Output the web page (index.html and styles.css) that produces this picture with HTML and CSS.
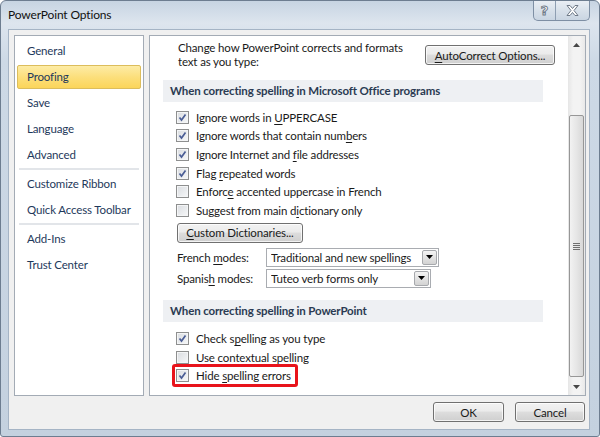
FILE: index.html
```html
<!DOCTYPE html>
<html lang="en">
  <head>
    <meta charset="UTF-8">
    <meta name="viewport" content="width=device-width, initial-scale=1.0">
    <title>PowerPoint Options</title>
    <link rel="stylesheet" href="styles.css">
  </head>
  <body>
    <div class="window">
      <div class="titlebar">
        <span class="title">PowerPoint Options</span>
        <div class="caption">
          <span class="cap-btn help">?</span>
          <span class="cap-btn close">
            <svg width="13" height="11" viewBox="0 0 13 11"><path d="M1 .5h3l2.5 3 2.5-3h3l-4 5 4 5h-3l-2.5-3-2.5 3h-3l4-5z" fill="#fff" stroke="#6f7a88" stroke-linejoin="round"/></svg>
          </span>
        </div>
      </div>

      <div class="client">
        <div class="panes">
          <ul class="nav">
            <li>General</li>
            <li class="selected">Proofing</li>
            <li>Save</li>
            <li>Language</li>
            <li>Advanced</li>
            <li class="sep"></li>
            <li>Customize Ribbon</li>
            <li>Quick Access Toolbar</li>
            <li class="sep"></li>
            <li>Add-Ins</li>
            <li>Trust Center</li>
          </ul>

          <div class="content">
            <div class="scroll-area">
              <div class="intro">
                <p>Change how PowerPoint corrects and formats text as you type:</p>
                <button class="btn autocorrect"><u>A</u>utoCorrect Options...</button>
              </div>

              <h3 class="section">When correcting spelling in Microsoft Office programs</h3>
              <div class="options">
                <div class="option"><span class="cb"><svg viewBox="0 0 11 11"><path d="M2.5 5.5 4.5 8 8.5 2.5"/></svg></span><span>Ignore words in <u>U</u>PPERCASE</span></div>
                <div class="option"><span class="cb"><svg viewBox="0 0 11 11"><path d="M2.5 5.5 4.5 8 8.5 2.5"/></svg></span><span>Ignore words that contain num<u>b</u>ers</span></div>
                <div class="option"><span class="cb"><svg viewBox="0 0 11 11"><path d="M2.5 5.5 4.5 8 8.5 2.5"/></svg></span><span>Ignore Internet and <u>f</u>ile addresses</span></div>
                <div class="option"><span class="cb"><svg viewBox="0 0 11 11"><path d="M2.5 5.5 4.5 8 8.5 2.5"/></svg></span><span>Flag <u>r</u>epeated words</span></div>
                <div class="option"><span class="cb"></span><span>Enforc<u>e</u> accented uppercase in French</span></div>
                <div class="option"><span class="cb"></span><span>Suggest from main d<u>i</u>ctionary only</span></div>
              </div>

              <button class="btn dict"><u>C</u>ustom Dictionaries...</button>

              <div class="mode-row french">
                <span class="mode-label">French <u>m</u>odes:</span>
                <div class="select">
                  <span class="value">Traditional and new spellings</span>
                  <span class="arrow"><svg width="7" height="4" viewBox="0 0 7 4"><path d="M0 0h7L3.5 4z"/></svg></span>
                </div>
              </div>
              <div class="mode-row spanish">
                <span class="mode-label">Spanis<u>h</u> modes:</span>
                <div class="select">
                  <span class="value">Tuteo verb forms only</span>
                  <span class="arrow"><svg width="7" height="4" viewBox="0 0 7 4"><path d="M0 0h7L3.5 4z"/></svg></span>
                </div>
              </div>

              <h3 class="section second">When correcting spelling in PowerPoint</h3>
              <div class="options second">
                <div class="option"><span class="cb"><svg viewBox="0 0 11 11"><path d="M2.5 5.5 4.5 8 8.5 2.5"/></svg></span><span>Check s<u>p</u>elling as you type</span></div>
                <div class="option"><span class="cb"></span><span>Use co<u>n</u>textual spelling</span></div>
                <div class="highlight">
                  <div class="option"><span class="cb"><svg viewBox="0 0 11 11"><path d="M2.5 5.5 4.5 8 8.5 2.5"/></svg></span><span>Hide <u>s</u>pelling errors</span></div>
                </div>
              </div>
            </div>

            <div class="scrollbar">
              <div class="sb-arrow"><svg width="7" height="4" viewBox="0 0 7 4"><path d="M0 4 3.5 0 7 4z"/></svg></div>
              <div class="sb-gap"></div>
              <div class="sb-thumb">
                <svg width="7" height="7" viewBox="0 0 7 7"><path d="M0 .5h7M0 2.5h7M0 4.5h7M0 6.5h7"/></svg>
              </div>
              <div class="sb-rest"></div>
              <div class="sb-arrow"><svg width="7" height="4" viewBox="0 0 7 4"><path d="M0 0h7L3.5 4z"/></svg></div>
            </div>
          </div>
        </div>

        <div class="footer">
          <button class="btn ok">OK</button>
          <button class="btn cancel">Cancel</button>
        </div>
      </div>
    </div>
  </body>
</html>
```

FILE: styles.css
```css
* {
  box-sizing: border-box;
  margin: 0;
  padding: 0;
}

html, body {
  height: 100%;
  overflow: hidden;
}

body {
  background: #fff;
  color: #1a1a1a;
  font-family: Lato, "Liberation Sans", sans-serif;
  font-size: 11.5px;
  letter-spacing: -0.15px;
}

u {
  text-decoration-thickness: 1px;
  text-underline-offset: 2px;
}

/* window frame */

.window {
  width: 600px;
  height: 437px;
  border: 1px solid #6d7d90;
  border-radius: 6px 6px 3px 3px;
  background: linear-gradient(180deg, #c7d4e2 0, #dde5ee 22px, #cdd9e6 60px, #c4d1df 100%);
  padding: 0 9px 6px 7px;
  display: flex;
  flex-direction: column;
}

.titlebar {
  height: 28px;
  display: flex;
  align-items: flex-start;
}

.title {
  padding-top: 6px;
  line-height: 15px;
  font-size: 12px;
  color: #111;
}

.caption {
  margin-left: auto;
  display: flex;
  height: 20px;
  border: 1px solid #7e8fa4;
  border-top: none;
  border-radius: 0 0 5px 5px;
  overflow: hidden;
  background: linear-gradient(180deg, #e9eef4, #d6dfe9 55%, #c9d5e2);
}

.cap-btn {
  display: flex;
  align-items: center;
  justify-content: center;
  height: 100%;
}

.cap-btn.help {
  width: 22px;
  border-right: 1px solid #8e9eb2;
  font-family: "DejaVu Sans", sans-serif;
  font-size: 13px;
  font-weight: bold;
  color: #fff;
  -webkit-text-stroke: 1px #6f7a88;
}

.cap-btn.close {
  width: 33px;
}

/* client area */

.client {
  flex: 1;
  display: flex;
  flex-direction: column;
  background: #f0f0f0;
  border: 1px solid #a5b4c5;
}

.panes {
  height: 366px;
  display: flex;
  gap: 5px;
  padding: 5px 3px 0 5px;
}

.nav {
  width: 130px;
  background: #fff;
  border: 1px solid #a3abb5;
  list-style: none;
  padding: 1px 0 0;
}

.nav li {
  height: 24px;
  line-height: 22px;
  margin: 2px 2px 0;
  padding-left: 9px;
  color: #1e395b;
  border: 1px solid transparent;
  border-radius: 2px;
  white-space: nowrap;
}

.nav li.selected {
  background: linear-gradient(180deg, #fdeca6, #fcdf7c 50%, #fbd55a);
  border-color: #dcbd5c;
}

.nav li.sep {
  height: 2px;
  margin: 1px 4px 0;
  background: #e2e5e9;
  border: none;
  border-radius: 0;
}

.content {
  flex: 1;
  display: flex;
  background: #fff;
  border: 1px solid #a3abb5;
  overflow: hidden;
}

.scroll-area {
  flex: 1;
  padding: 5px 13px 0 0;
  overflow: hidden;
}

.intro {
  display: flex;
  align-items: flex-start;
  padding-left: 28px;
}

.intro p {
  width: 240px;
  line-height: 14px;
}

.btn {
  height: 20px;
  border: 1px solid #707070;
  border-radius: 3px;
  background: linear-gradient(180deg, #f2f2f2 0, #ebebeb 45%, #dddddd 50%, #cfcfcf 100%);
  box-shadow: inset 0 0 0 1px rgba(255, 255, 255, .75);
  font: inherit;
  letter-spacing: inherit;
  color: #1a1a1a;
  text-align: center;
}

.btn.autocorrect {
  width: 130px;
  margin: 4px 0 0 auto;
}

.section {
  height: 22px;
  line-height: 22px;
  margin: 11px 12px 0 13px;
  padding-left: 7px;
  background: #eef0f3;
  color: #2b3b52;
  font-size: 11.5px;
  font-weight: bold;
  white-space: nowrap;
}

.section.second {
  margin-top: 12px;
}

.options {
  display: flex;
  flex-direction: column;
  align-items: flex-start;
  padding: 6px 0 0 26px;
}

.options.second {
  padding-top: 8px;
}

.option {
  height: 18.6px;
  display: flex;
  align-items: center;
  gap: 7px;
  white-space: nowrap;
}

.cb {
  width: 13px;
  height: 13px;
  flex: none;
  border: 1px solid #8e8f8f;
  background: linear-gradient(135deg, #d9dce0, #f7f8f9);
  box-shadow: inset 0 0 0 1px #f4f5f6;
}

.cb svg {
  display: block;
  width: 11px;
  height: 11px;
  fill: none;
  stroke: #4a5d95;
  stroke-width: 1.7;
}

.highlight {
  display: flex;
  margin: -3px 0 0 -4px;
  padding: 0 4px 0 1px;
  border: 3px solid #e8131b;
  border-radius: 3px;
}

.highlight .option {
  height: 17px;
}

.btn.dict {
  display: block;
  width: 126px;
  margin: 3px 0 0 27px;
}

.mode-row {
  display: flex;
  align-items: center;
  margin: 2px 0 0 27px;
}

.mode-row.french {
  margin-top: 5px;
}

.mode-label {
  width: 89px;
}

.select {
  height: 19px;
  display: flex;
  align-items: center;
  padding-left: 4px;
  background: #fff;
  border: 1px solid #a9acb1;
}

.french .select {
  width: 173px;
}

.spanish .select {
  width: 165px;
}

.select .value {
  flex: 1;
  overflow: hidden;
  white-space: nowrap;
}

.select .arrow {
  width: 15px;
  height: 15px;
  margin: 0 1px;
  display: flex;
  align-items: center;
  justify-content: center;
  border: 1px solid #a7a9ad;
  border-radius: 2px;
  background: linear-gradient(180deg, #f4f4f4, #e3e3e3 50%, #d3d3d3);
}

/* scrollbar */

.scrollbar {
  width: 17px;
  display: flex;
  flex-direction: column;
  background: linear-gradient(90deg, #e6e6e6, #f3f3f3 30%, #f3f3f3 70%, #e8e8e8);
}

.sb-arrow {
  height: 17px;
  display: flex;
  align-items: center;
  justify-content: center;
  fill: #474747;
}

.sb-gap {
  height: 62px;
}

.sb-thumb {
  height: 262px;
  margin: 0 1px;
  display: flex;
  align-items: center;
  justify-content: center;
  border: 1px solid #979797;
  border-radius: 2px;
  background: linear-gradient(90deg, #f2f2f2, #e6e6e6 50%, #d8d8d8);
  stroke: #6f6f6f;
}

.sb-rest {
  flex: 1;
}

/* dialog buttons */

.footer {
  flex: 1;
  display: flex;
  justify-content: flex-end;
  gap: 11px;
  padding: 6px 4px 0 0;
}

.btn.ok {
  width: 71px;
}

.btn.cancel {
  width: 70px;
}
```
